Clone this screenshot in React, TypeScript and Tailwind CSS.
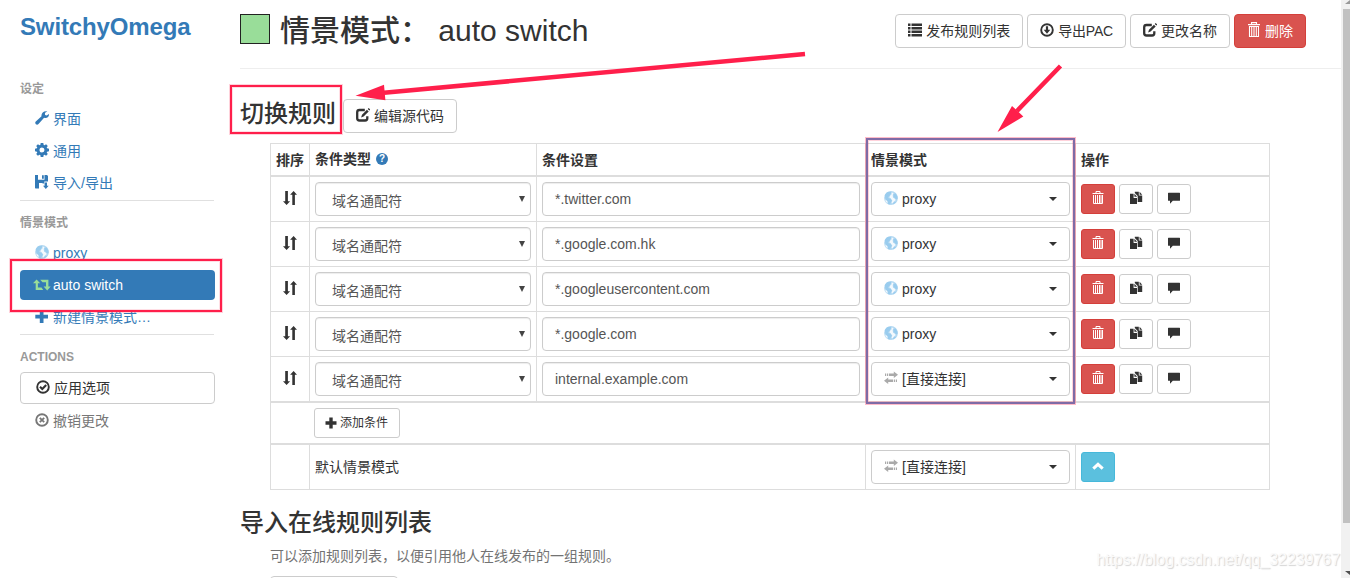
import type { ReactNode } from "react";

function Icon({ children, className = "" }: { children: ReactNode; className?: string }) {
  return (
    <svg viewBox="0 0 14 14" width="14" height="14" fill="currentColor" className={`inline-block shrink-0 ${className}`}>
      {children}
    </svg>
  );
}

const Wrench = () => (
  <Icon>
    <path d="M12.300.3 9.900 2.100l.2 1.900 1.600.5 2.200-1.500c.4 2.200-1.100 4-3.300 4-.6 0-1 0-1.500-.2L3.500 13c-.8.8-1.800.8-2.600.2C.1 12.500 0 11.300.8 10.500L6.500 5.200C6.100 2.300 8.500-.3 12.300.3Z" />
  </Icon>
);
const Cog = () => (
  <Icon>
    <path
      fillRule="evenodd"
      d="M5.700 0h2.600l.4 1.900.8.400L11.100 1.200l1.700 1.700-1.100 1.600.4.8 1.900.4v2.600l-1.900.4-.4.800 1.100 1.600-1.700 1.700-1.600-1.100-.8.400L8.300 14H5.700l-.4-1.900-.8-.4-1.600 1.100-1.700-1.700 1.100-1.600-.4-.8L0 8.300V5.700l1.900-.4.400-.8-1.100-1.600 1.700-1.700 1.600 1.100.8-.4ZM7 4.500a2.500 2.500 0 1 0 0 5 2.500 2.500 0 0 0 0-5Z"
    />
  </Icon>
);
const SaveFile = () => (
  <Icon>
    <path d="M0 0h3v4.800h6.500V0H12l1 1v5.500H9.300v2H7.500V8H4v5.500H.5L0 13Z" />
    <path d="M7 .3h1.800v3.500H7ZM9.600 7.500H12v3.300h1.700L10.800 14 8 10.800h1.600Z" />
  </Icon>
);
const Globe = () => (
  <Icon>
    <circle cx="7" cy="7" r="6.900" fill="#b4d9f2" />
    <path fill="#99ccee" d="M.8 4 3 1.300 6.500.8 7.500 2 6 3.500 5.500 5.300 4 6 4.500 7.200 6.500 7.800 7.800 9.500 6.800 11.500 6 13.500 4 13 3.800 10.500 1.500 8.200ZM9.500 3 11.500 2.500 13.500 5.500 13.500 8 12 8.500 10.800 6.800 9.500 6.500ZM9 12l2-1.300 1 .5-2.500 2Z" />
    <path fill="#f4f9fd" d="M7.600 1.500 9.500 2 8.700 4 9 6.500 10.500 7.500 11.800 9 10 10.500 8.500 12.300 7.500 12 8.300 9.500 6.500 7 5.300 6.500 6 4.800 7.500 3.500ZM1.300 8.500 3.300 10.300 3.500 12.300 1.800 10.800Z" />
  </Icon>
);
const Retweet = () => (
  <svg viewBox="0 0 18 12" width="18" height="12" className="-ml-0.5 shrink-0 fill-[#99dd99]">
    <path d="M3.600.5 7.200 4.300H4.900v4.200h3.600l1.800 2.500H2.700V4.300H0ZM7.200.8h8.200v6.600h2.300l-3.500 4-3.600-4h2.400V3.200H9.500Z" />
  </svg>
);
const Plus = () => (
  <Icon>
    <path d="M4.800.5h3.700v4.300H13v3.700H8.500V13H4.800V8.500H.3V4.800h4.500Z" />
  </Icon>
);
const Ring = () => <circle cx="7" cy="7" r="5.800" fill="none" stroke="currentColor" strokeWidth="1.900" />;
const OkCircle = () => (
  <Icon>
    <Ring />
    <path d="m4 6.700 2.300 2.300L10.200 5" fill="none" stroke="currentColor" strokeWidth="2.100" />
  </Icon>
);
const RemoveCircle = () => (
  <Icon>
    <Ring />
    <path d="m4.800 4.800 4.400 4.400m0-4.400L4.800 9.200" fill="none" stroke="currentColor" strokeWidth="1.800" />
  </Icon>
);
const Download = () => (
  <Icon>
    <Ring />
    <path d="M5.900 3.200h2.200v3.600h2.200L7 10.700 3.700 6.800h2.200Z" />
  </Icon>
);
const List = () => (
  <Icon>
    <path d="M0 .5h2.500V3H0Zm3.500 0H14V3H3.500ZM0 4h2.500v2.500H0Zm3.500 0H14v2.500H3.500ZM0 7.500h2.500V10H0Zm3.500 0H14V10H3.500ZM0 11h2.500v2.500H0Zm3.500 0H14v2.500H3.500Z" />
  </Icon>
);
const Edit = () => (
  <Icon>
    <path d="M8.800 2H3.500Q1.200 2 1.200 4.200v6.100q0 2.200 2.300 2.200h5.600q2.200 0 2.200-2.200V8.300" fill="none" stroke="currentColor" strokeWidth="2.300" />
    <path d="m10.900 1.700 1.800 1.800-5.100 5-2.500.9.900-2.600ZM11.700 1l1-1 1.600 1.600-1 1Z" />
  </Icon>
);
const Trash = () => (
  <svg viewBox="0 0 14 16" width="14" height="16" fill="none" stroke="currentColor" strokeWidth="1.100" className="-mt-px">
    <path d="M4.500 2V.6h5V2M1 2.600h12M2.500 4.500h9v10h-9ZM4.700 5v9M7 5v9M9.300 5v9" />
  </svg>
);
const SmallTrash = () => (
  <svg viewBox="0 0 12 13" width="12" height="13" fill="none" stroke="currentColor" strokeWidth="1" className="-mt-px mb-px">
    <path d="M4 2V.5h4V2M.5 2.500h11M1.500 4v8.500h9V4M3.500 4v8M5.500 4v8M7.500 4v8M9 4v8" />
  </svg>
);
const Sort = () => (
  <Icon>
    <path d="M2.200 0h2.700v10.200h2.200L3.600 14 0 10.200h2.200ZM9.300 14V3.800H7.100L10.600 0l3.500 3.800h-2.200V14Z" />
  </Icon>
);
const Duplicate = () => (
  <Icon>
    <path d="M1 2.800h3.600V7H8v6H1ZM5.400 2.800l2.700 3H5.400ZM5.800.8h4V4.500h3.400V11H8.700V5L5.800 1.900ZM10.600.8l2.600 2.900h-2.600Z" />
  </Icon>
);
const Comment = () => (
  <Icon>
    <path d="M1.500 1.700h11q.5 0 .5.500v7q0 .5-.5.500H5.800L3 12.700v-3H1.500q-.5 0-.5-.5v-7q0-.5.5-.5Z" />
  </Icon>
);
const ChevronUp = () => (
  <Icon>
    <path d="m2.300 9.700 4.700-4.400 4.700 4.400" fill="none" stroke="currentColor" strokeWidth="3" />
  </Icon>
);
const Transfer = () => (
  <Icon className="text-[#aaaaaa]">
    <path d="M1 2.500h1v2.500H1Zm1.800 0H4v2.500H2.800Zm2 0h5V.6L14 3.700 9.800 6.900V5h-5ZM13 8.500h-1V11h1Zm-1.800 0H10V11h1.200Zm-2 0h-5V6.600L0 9.700l4.200 3.200V11h5Z" />
  </Icon>
);

function SideItem({
  icon,
  children,
  className = "text-[#337ab7]",
  labelClassName = "",
}: {
  icon: ReactNode;
  children: ReactNode;
  className?: string;
  labelClassName?: string;
}) {
  return (
    <li className={`flex h-[30px] items-center rounded pl-[15px] ${className}`}>
      <span className="mr-1 flex w-3.5">{icon}</span>
      <span className={labelClassName}>{children}</span>
    </li>
  );
}

function Button({
  icon,
  children,
  tone = "border-[#cccccc] bg-white",
  labelClassName = "",
}: {
  icon: ReactNode;
  children: ReactNode;
  tone?: string;
  labelClassName?: string;
}) {
  return (
    <button className={`flex h-[34px] items-center gap-1 rounded border px-3 whitespace-nowrap ${tone}`}>
      <span className="flex pb-0.5">{icon}</span>
      <span className={labelClassName}>{children}</span>
    </button>
  );
}

function SmallButton({ children, className = "border-[#cccccc] bg-white" }: { children: ReactNode; className?: string }) {
  return <button className={`flex h-[30px] w-[34px] items-center justify-center rounded-[3px] border pb-0.5 ${className}`}>{children}</button>;
}

function ProfileSelect({ direct = false }: { direct?: boolean }) {
  return (
    <button className="flex h-[34px] w-[199px] items-center rounded border border-[#cccccc] pr-3 pl-3">
      <span className="mr-1 flex pb-0.5">{direct ? <Transfer /> : <Globe />}</span>
      <span>{direct ? "[直接连接]" : "proxy"}</span>
      <svg viewBox="0 0 8 4" className="ml-auto h-1 w-2">
        <path d="M0 0h8L4 4Z" fill="#333" />
      </svg>
    </button>
  );
}

function Row({ cells, className = "h-[45px] border-t" }: { cells: ReactNode[]; className?: string }) {
  return (
    <div className={`grid grid-cols-[39px_227px_329px_210px_194px] border-[#dddddd] ${className}`}>
      {cells.map((cell, i) => (
        <div key={i} className="flex items-center border-l border-[#dddddd] pl-[5px]">
          {cell}
        </div>
      ))}
    </div>
  );
}

const rules = ["*.twitter.com", "*.google.com.hk", "*.googleusercontent.com", "*.google.com", "internal.example.com"];

function RuleRow({ host, first, direct }: { host: string; first: boolean; direct: boolean }) {
  return (
    <Row
      className={first ? "h-[46px] border-t-2" : "h-[45px] border-t"}
      cells={[
        <span className="flex pb-0.5 pl-[7px]">
          <Sort />
        </span>,
        <div className="flex h-[34px] w-[216px] items-center justify-between rounded border border-[#cccccc] pr-[5px] pl-4 text-[#555555] shadow-[inset_0_1px_1px_rgba(0,0,0,0.075)]">
          <span className="pt-[3px]">域名通配符</span>
          <svg viewBox="0 0 6 6" className="h-1.5 w-1.5">
            <path d="M0 0h6L3 6Z" fill="#444" />
          </svg>
        </div>,
        <div className="flex h-[34px] w-[318px] items-center rounded border border-[#cccccc] px-3 text-[#555555] shadow-[inset_0_1px_1px_rgba(0,0,0,0.075)]">
          {host}
        </div>,
        <ProfileSelect direct={direct} />,
        <div className="flex gap-1">
          <SmallButton className="border-[#d43f3a] bg-[#d9534f] text-white">
            <SmallTrash />
          </SmallButton>
          <SmallButton>
            <Duplicate />
          </SmallButton>
          <SmallButton>
            <Comment />
          </SmallButton>
        </div>,
      ]}
    />
  );
}

function Sidebar() {
  return (
    <aside className="w-60 shrink-0 pr-[25px] pl-5">
      <h1 className="pt-2.5 text-2xl leading-[34px] font-bold tracking-[-0.14px] text-[#337ab7]">SwitchyOmega</h1>
      <h2 className="mt-9 text-xs leading-[18px] font-bold text-[#999999]">设定</h2>
      <ul className="mt-[5px] mr-px flex flex-col gap-0.5 border-b border-[#e0e0e0] pb-[3px]">
        <SideItem icon={<Wrench />} labelClassName="pt-0.5">
          界面
        </SideItem>
        <SideItem icon={<Cog />} labelClassName="pt-0.5">
          通用
        </SideItem>
        <SideItem icon={<SaveFile />} labelClassName="pt-0.5">
          导入/导出
        </SideItem>
      </ul>
      <h2 className="mt-[13px] text-xs leading-[18px] font-bold text-[#999999]">情景模式</h2>
      <ul className="mt-[6px] flex flex-col gap-0.5 pb-[2px]">
        <SideItem icon={<span className="flex pb-0.5"><Globe /></span>}>proxy</SideItem>
        <SideItem icon={<Retweet />} className="bg-[#337ab7] text-white">
          auto switch
        </SideItem>
        <SideItem icon={<Plus />}>新建情景模式…</SideItem>
      </ul>
      <div className="mr-px border-b border-[#e0e0e0]" />
      <h2 className="mt-[13px] text-xs leading-[18px] font-bold text-[#999999]">ACTIONS</h2>
      <button className="mt-[6px] flex h-8 w-full items-center rounded border border-[#cccccc] pl-[15px]">
        <span className="flex pb-0.5">
          <OkCircle />
        </span>
        <span className="ml-1">应用选项</span>
      </button>
      <ul className="mt-0.5">
        <SideItem icon={<span className="flex pb-0.5"><RemoveCircle /></span>} className="text-[#777777]">
          撤销更改
        </SideItem>
      </ul>
    </aside>
  );
}

function Annotations() {
  return (
    <div className="pointer-events-none absolute inset-0">
      <div className="absolute top-[259px] left-[10px] h-[53px] w-[212px] border-2 border-[#ff1f4b] shadow-[0_0_0_1px_rgba(255,31,75,0.2),inset_0_0_0_1px_rgba(255,31,75,0.15)]" />
      <div className="absolute top-[85px] left-[230px] h-[49px] w-[112px] border-2 border-[#ff1f4b] shadow-[0_0_0_1px_rgba(255,31,75,0.2),inset_0_0_0_1px_rgba(255,31,75,0.15)]" />
      <div className="absolute top-[138px] left-[866px] h-[266px] w-[209px] border-2 border-[#7f6ba6] shadow-[0_0_0_1px_rgba(255,31,75,0.3),inset_0_0_0_1px_rgba(255,31,75,0.2)]" />
      <svg viewBox="0 0 1350 578" className="absolute inset-0 h-full w-full fill-[#ff1f4b] stroke-[#ff1f4b]">
        <path d="M805 54 384 92.700M1060.500 66 1017 111" strokeWidth="4.500" />
        <path d="m355.500 95.800 28.500-11 1.400 15.400ZM997.500 132l14.500-26 5 4.500 6.300 6Z" stroke="none" />
      </svg>
      <div className="absolute right-[10px] bottom-2 text-base leading-5 tracking-[-0.06px] text-[#fafafa] [text-shadow:1px_1px_1px_#d4d4d4]">
        https://blog.csdn.net/qq_32239767
      </div>
    </div>
  );
}

export default function App() {
  return (
    <div className="relative flex h-[578px] w-[1350px] overflow-hidden bg-white font-['Liberation_Sans','Noto_Sans_CJK_SC',sans-serif] text-sm leading-5 text-[#333333]">
      <Sidebar />
      <main className="min-w-0 flex-1">
        <header className="flex h-[69px] items-start border-b border-[#eeeeee] pt-3.5 pr-[35px]">
          <span className="mr-2.5 h-[30px] w-[30px] border border-[#222] bg-[#99dd99]" />
          <h1 className="text-[30px] leading-[33px] font-medium whitespace-pre">情景模式： auto switch</h1>
          <div className="ml-auto flex gap-1">
            <Button icon={<List />}>发布规则列表</Button>
            <Button icon={<Download />} labelClassName="tracking-[-0.2px]">
              导出PAC
            </Button>
            <Button icon={<Edit />}>更改名称</Button>
            <Button icon={<Trash />} tone="border-[#d43f3a] bg-[#d9534f] text-white">
              删除
            </Button>
          </div>
        </header>
        <div className="flex h-[74px] items-start pt-[30px]">
          <h2 className="mr-[7px] pt-px text-2xl leading-7 font-medium">切换规则</h2>
          <Button icon={<Edit />}>编辑源代码</Button>
        </div>
        <div className="ml-[30px] w-[1000px] border-r border-b border-[#dddddd]">
          <Row
            className="h-8 border-t"
            cells={[
              <b>排序</b>,
              <b className="flex items-center gap-[5px] pb-0.5">
                条件类型
                <span className="flex h-3 w-3 items-center justify-center rounded-full bg-[#337ab7] text-[10px] leading-3 text-white">?</span>
              </b>,
              <b>条件设置</b>,
              <b>情景模式</b>,
              <b>操作</b>,
            ]}
          />
          {rules.map((host, i) => (
            <RuleRow key={host} host={host} first={i === 0} direct={i === 4} />
          ))}
          <div className="grid h-[42px] grid-cols-[39px_1fr] border-t-2 border-[#dddddd]">
            <div className="border-l border-[#dddddd]" />
            <div className="flex items-center pl-[5px]">
              <button className="flex h-[30px] w-[86px] items-center rounded-[3px] border border-[#cccccc] pl-2.5 text-xs">
                <svg viewBox="0 0 12 12" className="mr-[3px] h-3 w-3 fill-current">
                  <path d="M4.300.500h3.400v3.800h3.800v3.400H7.700v3.800H4.300V7.700H.5V4.300h3.800Z" />
                </svg>
                添加条件
              </button>
            </div>
          </div>
          <div className="grid h-[46px] grid-cols-[39px_556px_210px_194px] border-t-2 border-[#dddddd]">
            <div className="border-l border-[#dddddd]" />
            <div className="flex items-center border-l border-[#dddddd] pl-[5px]">默认情景模式</div>
            <div className="flex items-center border-l border-[#dddddd] pl-[5px]">
              <ProfileSelect direct />
            </div>
            <div className="flex items-center border-l border-[#dddddd] pl-[5px]">
              <SmallButton className="border-[#46b8da] bg-[#5bc0de] text-white">
                <ChevronUp />
              </SmallButton>
            </div>
          </div>
        </div>
        <h2 className="mt-[19px] text-2xl leading-7 font-medium">导入在线规则列表</h2>
        <p className="mt-[9px] ml-[30px] text-[#737373]">可以添加规则列表，以便引用他人在线发布的一组规则。</p>
        <div className="mt-[10px] ml-[30px] h-[34px] w-32 rounded border border-[#cccccc]" />
      </main>
      <div className="flex w-[9px] shrink-0 flex-col bg-[#f1f1f1] pl-0.5">
        <svg viewBox="0 0 7 9" className="h-[9px] w-[7px]">
          <path d="M2 4 7 0v4Z" fill="#999" />
        </svg>
        <div className="h-[514px] bg-[#c1c1c1]" />
        <svg viewBox="0 0 7 6" className="mt-auto mb-0.5 h-1.5 w-[7px]">
          <path d="M2 1h5v4Z" fill="#505050" />
        </svg>
      </div>
      <Annotations />
    </div>
  );
}
